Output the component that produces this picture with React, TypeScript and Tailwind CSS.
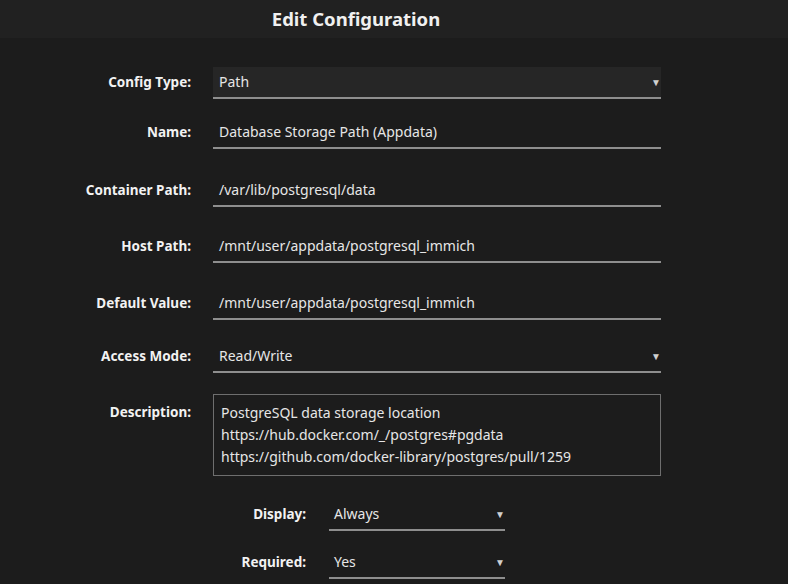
const font = { fontFamily: '"Noto Sans", "Open Sans", sans-serif' };

const Arrow = () => (
  <span className="absolute right-0 top-1/2 -translate-y-1/2 text-[10px] leading-none text-[#d0d0d0]">▼</span>
);

type RowProps = { label: string; className?: string; children: React.ReactNode };

const Row = ({ label, className = '', children }: RowProps) => (
  <div className={`flex items-center ${className}`}>
    <div className="w-[191px] shrink-0 pb-[2px] text-right text-[13.5px] font-bold text-[#f2f2f2]">{label}</div>
    <div className="ml-[22px] w-[448px]">{children}</div>
  </div>
);

const Field = ({ value, select, shaded }: { value: string; select?: boolean; shaded?: boolean }) => (
  <div
    className={`relative flex h-[32px] items-center border-b-2 border-[#8e8e8e] pb-[1px] pl-[6px] text-[14px] text-[#e6e6e6] ${
      shaded ? 'bg-[#262626]' : ''
    }`}
  >
    {value}
    {select && <Arrow />}
  </div>
);

const SmallRow = ({ label, value, className = '' }: { label: string; value: string; className?: string }) => (
  <div className={`flex items-center ${className}`}>
    <div className="w-[306px] shrink-0 pb-[2px] text-right text-[13.5px] font-bold text-[#f2f2f2]">{label}</div>
    <div className="ml-[23px] w-[176px]">
      <div className="relative flex h-[32px] items-center border-b-2 border-[#8e8e8e] pb-[1px] pl-[5px] text-[14px] text-[#e6e6e6]">
        {value}
        <Arrow />
      </div>
    </div>
  </div>
);

export default function App() {
  return (
    <div className="h-[584px] w-[788px] overflow-hidden bg-[#1c1c1c]" style={font}>
      <div className="flex h-[38px] items-center bg-[#212121]">
        <div className="w-[712px] text-center text-[18.5px] font-bold text-[#f0f0f0]">Edit Configuration</div>
      </div>
      <div className="flex flex-col">
        <Row label="Config Type:" className="mt-[29px]">
          <Field value="Path" select shaded />
        </Row>
        <Row label="Name:" className="mt-[18px]">
          <Field value="Database Storage Path (Appdata)" />
        </Row>
        <Row label="Container Path:" className="mt-[26px]">
          <Field value="/var/lib/postgresql/data" />
        </Row>
        <Row label="Host Path:" className="mt-[24px]">
          <Field value="/mnt/user/appdata/postgresql_immich" />
        </Row>
        <Row label="Default Value:" className="mt-[25px]">
          <Field value="/mnt/user/appdata/postgresql_immich" />
        </Row>
        <Row label="Access Mode:" className="mt-[21px]">
          <Field value="Read/Write" select />
        </Row>
        <div className="mt-[21px] flex items-start">
          <div className="w-[191px] shrink-0 pt-[8px] text-right text-[13.5px] font-bold text-[#f2f2f2]">Description:</div>
          <div className="ml-[22px] h-[82px] w-[448px] border border-[#6e6e6e] px-[7px] pt-[7px] text-[14px] leading-[22px] text-[#e6e6e6]">
            <div>PostgreSQL data storage location</div>
            <div>https://hub.docker.com/_/postgres#pgdata</div>
            <div>https://github.com/docker-library/postgres/pull/1259</div>
          </div>
        </div>
        <SmallRow label="Display:" value="Always" className="mt-[23px]" />
        <SmallRow label="Required:" value="Yes" className="mt-[16px]" />
      </div>
    </div>
  );
}
